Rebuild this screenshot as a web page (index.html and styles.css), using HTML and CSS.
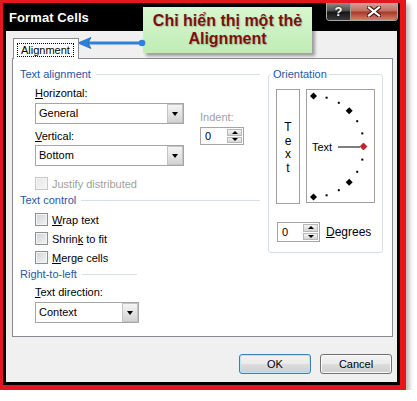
FILE: index.html
```html
<!DOCTYPE html>
<html lang="vi">
<head>
  <meta charset="UTF-8">
  <title>Format Cells</title>
  <link rel="stylesheet" href="styles.css">
</head>
<body>
  <div class="frame">
    <div class="window">
      <div class="titlebar">
        <span class="title">Format Cells</span>
        <div class="caption-btns">
          <span class="cap-btn help">?</span>
          <span class="cap-btn close">
            <svg width="14" height="11" viewBox="0 0 14 11">
              <path d="M2 1.5 L12 9.5 M12 1.5 L2 9.5" stroke="#3b1712" stroke-width="4.2" stroke-linecap="square"/>
              <path d="M2 1.5 L12 9.5 M12 1.5 L2 9.5" stroke="#fff" stroke-width="2.2" stroke-linecap="square"/>
            </svg>
          </span>
        </div>
      </div>

      <div class="dialog">
        <div class="tabs">
          <span class="tab"><span class="tab-label">Alignment</span></span>
        </div>

        <div class="panel">
          <div class="col-left">
            <div class="group-head">Text alignment</div>
            <div class="align-grid">
              <div class="align-main">
                <div class="label"><u>H</u>orizontal:</div>
                <div class="combo wide"><span class="combo-value">General</span><span class="combo-btn"></span></div>
                <div class="label gap"><u>V</u>ertical:</div>
                <div class="combo wide tight"><span class="combo-value">Bottom</span><span class="combo-btn"></span></div>
              </div>
              <div class="indent">
                <div class="label disabled">Indent:</div>
                <div class="spin indent-spin">
                  <span class="spin-value">0</span>
                  <span class="spin-btns"><span class="up"></span><span class="down"></span></span>
                </div>
              </div>
            </div>
            <div class="check disabled justify"><span class="box"></span>Justify distributed</div>

            <div class="group-head">Text control</div>
            <div class="check first"><span class="box"></span><span><u>W</u>rap text</span></div>
            <div class="check"><span class="box"></span><span>Shrin<u>k</u> to fit</span></div>
            <div class="check"><span class="box"></span><span><u>M</u>erge cells</span></div>

            <div class="group-head short">Right-to-left</div>
            <div class="label gap"><u>T</u>ext direction:</div>
            <div class="combo narrow"><span class="combo-value">Context</span><span class="combo-btn"></span></div>
          </div>

          <fieldset class="orient">
            <legend>Orientation</legend>
            <div class="orient-body">
              <div class="vtext"><span>T</span><span>e</span><span>x</span><span>t</span></div>
              <div class="dial">
                <svg width="67" height="112" viewBox="0 0 67 112">
                  <g fill="#000">
                    <rect x="18.6" y="6.7" width="2" height="2"/>
                    <rect x="30.8" y="11.8" width="2" height="2"/>
                    <rect x="49.2" y="30.2" width="2" height="2"/>
                    <rect x="54.3" y="42.4" width="2" height="2"/>
                    <rect x="54.3" y="68.6" width="2" height="2"/>
                    <rect x="49.2" y="80.8" width="2" height="2"/>
                    <rect x="30.8" y="99.2" width="2" height="2"/>
                    <rect x="18.6" y="104.3" width="2" height="2"/>
                    <polygon points="6.5,2.5 10,6 6.5,9.5 3,6"/>
                    <polygon points="42.2,17.3 45.7,20.8 42.2,24.3 38.7,20.8"/>
                    <polygon points="42.2,88.7 45.7,92.2 42.2,95.7 38.7,92.2"/>
                    <polygon points="6.5,103.5 10,107 6.5,110.5 3,107"/>
                  </g>
                  <line x1="31" y1="57" x2="53" y2="57" stroke="#000" stroke-width="1"/>
                  <polygon points="56.5,53 60,56.5 56.5,60 53,56.5" fill="#c8202c" stroke="#7a1018" stroke-width="0.6"/>
                  <text x="5" y="61" font-family="Liberation Sans, Arial, sans-serif" font-size="11" fill="#000">Text</text>
                </svg>
              </div>
            </div>
            <div class="degrees">
              <div class="spin deg-spin">
                <span class="spin-value">0</span>
                <span class="spin-btns"><span class="up"></span><span class="down"></span></span>
              </div>
              <span class="deg-label"><u>D</u>egrees</span>
            </div>
          </fieldset>
        </div>

        <div class="buttons">
          <button class="btn default">OK</button>
          <button class="btn">Cancel</button>
        </div>
      </div>
    </div>

    <div class="callout">Chỉ hiển thị một thẻ<br>Alignment</div>
    <svg class="pointer" width="72" height="14" viewBox="0 0 72 14">
      <line x1="12" y1="7" x2="66" y2="7" stroke="#2f82d8" stroke-width="3"/>
      <circle cx="66" cy="7" r="3.3" fill="#2f82d8"/>
      <path d="M2 7 L15 1.5 L12 7 L15 12.5 Z" fill="#2f82d8" stroke="#1f66b8" stroke-width="0.8"/>
    </svg>
  </div>
</body>
</html>
```

FILE: styles.css
```css
* {
  box-sizing: border-box;
}

body {
  margin: 0;
  background: #fff;
  font-family: 'Liberation Sans', Arial, sans-serif;
  font-size: 11px;
  color: #000;
}

u {
  text-decoration: underline;
  text-underline-offset: 1px;
}

.frame {
  position: relative;
  width: 406px;
  height: 390px;
  border: 3px solid #e5161c;
  border-right-width: 6px;
  border-bottom-width: 5px;
  box-shadow: 3px 4px 5px rgba(0, 0, 0, 0.3);
}

.window {
  height: 100%;
  display: flex;
  flex-direction: column;
  background: #000;
  padding: 0 3px 3px;
}

/* title bar */
.titlebar {
  height: 28px;
  display: flex;
  align-items: flex-start;
  flex-shrink: 0;
}

.title {
  color: #fff;
  font-weight: bold;
  font-size: 13px;
  line-height: 28px;
  padding: 1px 0 0 3px;
  letter-spacing: 0.1px;
}

.caption-btns {
  display: flex;
  margin-left: auto;
  margin-right: -1px;
  height: 18px;
  border: 1px solid #a9a9a9;
  border-top: none;
  border-radius: 0 0 4px 4px;
  overflow: hidden;
}

.cap-btn {
  display: flex;
  align-items: center;
  justify-content: center;
}

.cap-btn.help {
  width: 24px;
  color: #fff;
  font-weight: bold;
  font-size: 13px;
  text-shadow: 0 0 2px #000;
  background: linear-gradient(#8c8c8c 0%, #4a4a4a 48%, #141414 52%, #3a3a3a 100%);
  border-right: 1px solid #9a9a9a;
}

.cap-btn.close {
  width: 46px;
  background: linear-gradient(#d9a096 0%, #c26f62 46%, #a63a2a 54%, #d9806a 100%);
}

/* dialog body */
.dialog {
  flex: 1;
  display: flex;
  flex-direction: column;
  background: #f0f0f0;
  padding: 7px 4px 0 6px;
}

.tabs {
  display: flex;
}

.tab {
  position: relative;
  z-index: 1;
  height: 21px;
  margin: 0 0 -1px 1px;
  padding: 4px 4px 0 3px;
  background: #fff;
  border: 1px solid #898c95;
  border-bottom: none;
}

.tab-label {
  display: block;
  border: 1px dotted #000;
  padding: 0 3px;
  line-height: 12px;
}

.panel {
  height: 279px;
  display: flex;
  gap: 8px;
  padding: 8px 0 0 7px;
  background: #fff;
  border: 1px solid #898c95;
}

.col-left {
  width: 240px;
}

.group-head {
  display: flex;
  align-items: center;
  height: 14px;
  color: #1e5aa8;
}

.group-head::after {
  content: "";
  flex: 1;
  height: 1px;
  margin: 1px 0 0 5px;
  background: #d5dfe5;
}

.group-head.short {
  width: 117px;
  height: 13px;
}

.label {
  height: 14px;
  line-height: 14px;
}

.label.disabled,
.check.disabled {
  color: #a0a0a0;
}

.col-left > .label {
  margin-left: 15px;
}

.label.gap {
  margin-top: 5px;
}

.align-grid {
  display: flex;
  margin-top: 5px;
}

.align-main {
  width: 149px;
  margin-left: 15px;
}

.indent {
  margin-left: 16px;
  padding-top: 24px;
}

/* combo boxes */
.combo {
  display: flex;
  height: 21px;
  margin-top: 3px;
  background: #fff;
  border: 1px solid #a5a5a5;
}

.combo.tight {
  margin-top: 2px;
}

.combo.narrow {
  width: 104px;
  margin-left: 15px;
}

.combo-value {
  flex: 1;
  padding-left: 3px;
  line-height: 19px;
}

.combo-btn {
  width: 16px;
  display: flex;
  align-items: center;
  justify-content: center;
  background: linear-gradient(#f4f4f4, #d3d3d3);
  border: 1px solid #c4c4c4;
}

.combo-btn::after {
  content: "";
  border-left: 3.5px solid transparent;
  border-right: 3.5px solid transparent;
  border-top: 4px solid #000;
  margin-top: 1px;
}

/* spinners */
.spin {
  display: flex;
  background: #fff;
  border: 1px solid #a5a5a5;
}

.indent-spin {
  width: 44px;
  height: 18px;
  margin-top: 3px;
}

.deg-spin {
  width: 43px;
  height: 20px;
}

.spin-value {
  flex: 1;
  padding-left: 4px;
  display: flex;
  align-items: center;
}

.spin-btns {
  width: 16px;
  display: flex;
  flex-direction: column;
  gap: 1px;
  padding: 1px 1px 1px 0;
}

.spin-btns span {
  flex: 1;
  display: flex;
  align-items: center;
  justify-content: center;
  background: linear-gradient(#f4f4f4, #d5d5d5);
  border: 1px solid #b8b8b8;
}

.spin-btns .up::after {
  content: "";
  border-left: 3px solid transparent;
  border-right: 3px solid transparent;
  border-bottom: 3px solid #000;
}

.spin-btns .down::after {
  content: "";
  border-left: 3px solid transparent;
  border-right: 3px solid transparent;
  border-top: 3px solid #000;
}

/* check boxes */
.check {
  display: flex;
  align-items: center;
  gap: 4px;
  height: 19px;
  margin-left: 15px;
}

.check.justify {
  margin-top: 8px;
}

.check.first {
  margin-top: 3px;
}

.box {
  width: 13px;
  height: 13px;
  border: 1px solid #8e8f8f;
  background: linear-gradient(135deg, #cfd2d6, #f4f4f4);
  box-shadow: inset 0 0 0 1px #f4f4f4;
}

.check.disabled .box {
  border-color: #c8c8c8;
  background: linear-gradient(135deg, #e6e6e6, #f7f7f7);
}

/* orientation group */
.orient {
  width: 115px;
  height: 186px;
  margin: 0;
  padding: 8px 0 0 0;
  border: 1px solid #d5dfe5;
  border-radius: 3px;
}

.orient legend {
  margin-left: 2px;
  padding: 0 2px;
  line-height: 14px;
  color: #1e5aa8;
}

.orient-body {
  display: flex;
  gap: 6px;
  padding-left: 7px;
}

.vtext {
  width: 24px;
  height: 115px;
  display: flex;
  flex-direction: column;
  align-items: center;
  justify-content: center;
  padding-top: 3px;
  border: 1px solid #a0a0a0;
  line-height: 13.5px;
  font-size: 12px;
}

.dial {
  width: 69px;
  height: 114px;
  border: 1px solid #a0a0a0;
}

.dial svg {
  display: block;
}

.degrees {
  display: flex;
  align-items: center;
  gap: 6px;
  margin-top: 18px;
  padding-left: 8px;
}

.deg-label {
  font-size: 12px;
}

/* buttons */
.buttons {
  display: flex;
  justify-content: flex-end;
  gap: 9px;
  margin-top: 17px;
  padding-right: 1px;
}

.btn {
  width: 72px;
  height: 20px;
  padding: 0;
  font-family: 'Liberation Sans', Arial, sans-serif;
  font-size: 11px;
  color: #000;
  border: 1px solid #707070;
  border-radius: 3px;
  background: linear-gradient(#f2f2f2 0%, #ebebeb 50%, #dddddd 50%, #cfcfcf 100%);
  box-shadow: inset 0 0 0 1px #fbfbfb;
}

.btn.default {
  border-color: #3c7fb1;
  box-shadow: inset 0 0 0 1px #b9e6f9;
}

/* annotation */
.callout {
  position: absolute;
  left: 140px;
  top: 4px;
  width: 169px;
  height: 46px;
  padding-top: 5px;
  text-align: center;
  font-weight: bold;
  font-size: 16px;
  line-height: 18px;
  color: #7c0f0f;
  text-shadow: 1px 1px 1px rgba(0, 0, 0, 0.2);
  background: linear-gradient(#d8f7cf, #c0ecb6);
  box-shadow: 3px 3px 3px rgba(0, 0, 0, 0.35);
}

.pointer {
  position: absolute;
  left: 73px;
  top: 33px;
}
```
